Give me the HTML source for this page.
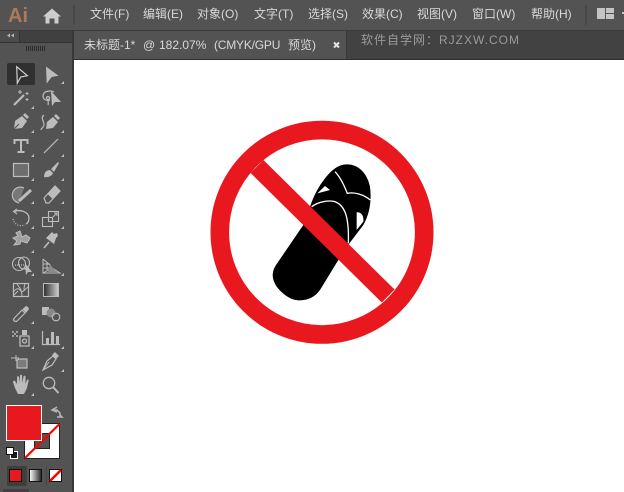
<!DOCTYPE html>
<html><head><meta charset="utf-8">
<style>
html,body{margin:0;padding:0;width:624px;height:492px;overflow:hidden;background:#fff}
#a{position:relative;width:624px;height:492px;overflow:hidden;background:#fff;font-family:"Liberation Sans","Noto Sans CJK SC",sans-serif}
.b{position:absolute}
.m{position:absolute;top:6px;font-size:12px;line-height:16px;color:#d8d8d8;white-space:nowrap}
.t{position:absolute;top:37px;font-size:12px;line-height:16px;color:#d8d8d8;white-space:nowrap}
</style></head><body><div id="a">
<div class="b" style="left:0;top:0;width:624px;height:30px;background:#535353"></div>
<div class="b" style="left:0;top:30px;width:624px;height:1px;background:#3a3a3a"></div>
<div class="b" style="left:0;top:31px;width:74px;height:461px;background:#535353"></div>
<div class="b" style="left:72px;top:31px;width:2px;height:461px;background:#383838"></div>
<div class="b" style="left:0;top:31px;width:72px;height:11px;background:#404040"></div>
<div class="b" style="left:0;top:31px;width:19px;height:11px;background:#4c4c4c"></div>
<div class="b" style="left:19px;top:31px;width:1px;height:11px;background:#333"></div>
<div class="b" style="left:0;top:42px;width:72px;height:1px;background:#333"></div>
<div class="b" style="left:74px;top:31px;width:550px;height:28px;background:#424242"></div>
<div class="b" style="left:74px;top:31px;width:272px;height:28px;background:#535353"></div>
<div class="b" style="left:346px;top:31px;width:1px;height:28px;background:#383838"></div>
<div class="b" style="left:74px;top:59px;width:550px;height:1px;background:#2f2f2f"></div>

<div class="b" style="left:8px;top:3px;font-size:20px;line-height:26px;font-weight:bold;color:#ad7a57">Ai</div>
<div class="b" style="left:73px;top:5px;width:2px;height:20px;background:#484848"></div>
<div class="b" style="left:585px;top:5px;width:2px;height:20px;background:#484848"></div>

<div class="m" style="left:90px">文件(F)</div>
<div class="m" style="left:143px">编辑(E)</div>
<div class="m" style="left:197px">对象(O)</div>
<div class="m" style="left:254px">文字(T)</div>
<div class="m" style="left:308px">选择(S)</div>
<div class="m" style="left:362px">效果(C)</div>
<div class="m" style="left:417px">视图(V)</div>
<div class="m" style="left:472px">窗口(W)</div>
<div class="m" style="left:531px">帮助(H)</div>

<div class="t" style="left:84px">未标题-1*</div>
<div class="t" style="left:143px">@</div>
<div class="t" style="left:159px">182.07%</div>
<div class="t" style="left:214px;letter-spacing:-.2px">(CMYK/GPU</div>
<div class="t" style="left:288px">预览)</div>
<div class="b" style="left:361px;top:32px;font-size:12px;line-height:16px;color:#9a9a9a;white-space:nowrap;letter-spacing:1px">软件自学网：RJZXW.COM</div>

<svg class="b" style="left:0;top:0" width="624" height="492" viewBox="0 0 624 492">
<!-- home -->
<path d="M43 16.500 52 8.500 61 16.500 58.500 16.500V23.500H54.500V18.500H49.500V23.500H45.500V16.500Z" fill="#cdcdcd"/>
<!-- workspace -->
<path d="M597 8h8v11h-8zM606 8h8v5h-8zM606 14h8v5h-8z" fill="#c4c4c4"/>
<rect x="622" y="12" width="2" height="2" fill="#c4c4c4"/>
<!-- tab close -->
<path d="M334 42.500 339 47.500M339 42.500 334 47.500" stroke="#e6e6e6" stroke-width="2"/>
<!-- panel collapse -->
<path d="M10 33.500 7 35.500 10 37.500ZM14 33.500 11 35.500 14 37.500Z" fill="#b5b5b5"/>
<!-- grip -->
<path d="M26.500 46V51M28.500 46V51M30.500 46V51M32.500 46V51M34.500 46V51M36.500 46V51M38.500 46V51M40.500 46V51M42.500 46V51M44.500 46V51" stroke="#2c2c2c" stroke-width="1"/>

<!-- selected tool -->
<rect x="7" y="63" width="28" height="22" rx="2" fill="#303030"/>

<g fill="none" stroke="#bcbcbc" stroke-width="1.200">
<!-- selection -->
<path d="M16.700 66.700 27.300 75.700 20.700 77 17.300 83.300Z" stroke="#d0d0d0"/>
<!-- direct selection -->
<path d="M46 66.500 58.500 75.700 51.700 77 46.700 83.500Z" fill="#bcbcbc" stroke="none"/>
<!-- wand -->
<path d="M14 105 24 95" stroke-width="2.200"/>
<path d="M20 90v4M18 92h4M27 92v3M25.500 93.500h3M27 98v3M25.500 99.500h3" stroke-width="1"/>
<!-- lasso -->
<path d="M54 92C50 90 43 91 43 96 43 100 47 101 50 100M49 99C47 101 49 103 48 105"/>
<circle cx="48" cy="98" r="1.500"/>
<path d="M51 91 61 102 55 102 52 106Z" fill="#bcbcbc" stroke="none"/>
<!-- pen -->
<path d="M14 129 15 121 22 116 27 121 22 128Z" fill="#bcbcbc" stroke="none"/>
<path d="M23 115 25 113 29 117 27 119Z" fill="#bcbcbc" stroke="none"/>
<path d="M14 129 19 124" stroke="#535353" stroke-width="1"/>
<!-- curvature -->
<path d="M46 129 47 122 53 117 58 122 53 128Z" fill="#bcbcbc" stroke="none"/>
<path d="M54 116 56 114 60 118 58 120Z" fill="#bcbcbc" stroke="none"/>
<path d="M44 115C40 118 44 121 44 124 44 128 41 128 41 130"/>
<!-- type -->
<path d="M14.500 144V140H27.500V144M21 140V152M17.500 152H24.500" stroke-width="2"/>
<!-- line -->
<path d="M44 153 58 139"/>
<!-- rect -->
<rect x="13.500" y="163.500" width="15" height="13" fill="#6e6e6e"/>
<!-- brush -->
<path d="M44 177C44 172 47 170 50 170L53 173C52 176 48 178 44 177Z" fill="#bcbcbc" stroke="none"/>
<path d="M51 169 58 162 59 163 54 172Z" fill="#bcbcbc" stroke="none"/>
<!-- shaper -->
<path d="M19 203A8 8 0 1 1 24 188" fill="#787878"/>
<path d="M19 201 31 190" stroke-width="3"/>
<!-- eraser -->
<path d="M44 198 55 186 60 191 49 203 46 203Z"/>
<path d="M47.500 194 55 186 60 191 52.500 199Z" fill="#bcbcbc" stroke="none"/>
<!-- rotate -->
<path d="M17 209 13.500 211.500 17 214" stroke-width="1.200"/>
<path d="M14 211.500C20 209 29 212 29 218 29 221 28 223 26 224" stroke-width="1.300"/>
<path d="M13 219C14 224 19 227 25 225" stroke-dasharray="1 1.500"/>
<!-- scale -->
<rect x="42.500" y="217.500" width="10" height="9" stroke-width="1.100"/>
<rect x="48.500" y="211.500" width="10" height="10" stroke-width="1.100"/>
<path d="M53 217 57 213M54 213H57V216" stroke-width="1"/>
<!-- warp -->
<path d="M13 238 18 236 16 233 20 231 22 237 26 235 30 238 27 243 21 241 20 244 14 245 17 241Z" fill="#a0a0a0" stroke-width="1"/>
<!-- pin -->
<path d="M44 248 49 242" stroke-width="1.600"/>
<path d="M46 238 52 232 54 234 57 233 58 236 56 238 54 244Z" fill="#bcbcbc" stroke="none"/>
<!-- shape builder -->
<ellipse cx="19" cy="264" rx="6.500" ry="6.500" stroke-width="1.100"/>
<ellipse cx="24" cy="263" rx="5.500" ry="6" stroke-width="1.100"/>
<path d="M15 265H24" stroke-dasharray="1 1"/>
<path d="M25 263 32 272 28 272 26 275Z" fill="#bcbcbc" stroke="none"/>
<!-- perspective -->
<path d="M43 259 43 273 52 268 60 273H43M43 259 50 265 52 268M43 264H50M43 268H50M47 262 47 270" stroke-width="1"/>
<path d="M50 265 57 272H48Z" fill="#8a8a8a" stroke="none"/>
<!-- mesh -->
<rect x="13.500" y="283.500" width="15" height="13" stroke-width="1.200"/>
<path d="M14 291C18 287 19 289 21 291 23 293 25 289 28 287M17 284C19 287 22 289 22 296M25 284C24 286 24 289 24 291M14 295 18 291" stroke-width="1"/>
</g>
<!-- gradient -->
<defs>
<linearGradient id="g" x1="0" x2="1" y1="0" y2="0"><stop offset="0" stop-color="#2c2c2c"/><stop offset="1" stop-color="#cfcfcf"/></linearGradient>
<linearGradient id="g2" x1="0" x2="1" y1="0" y2="0"><stop offset="0" stop-color="#fff"/><stop offset="1" stop-color="#222"/></linearGradient>
</defs>
<rect x="43.500" y="283.500" width="15" height="13" fill="url(#g)" stroke="#bcbcbc"/>

<g fill="none" stroke="#bcbcbc" stroke-width="1.200">
<!-- eyedropper -->
<path d="M14 321 13.500 319 22 310 25 313 16.500 321.500Z" stroke-width="1.200"/>
<path d="M22.500 309 26 306 28 307 29 309 26 313Z" fill="#bcbcbc" stroke="none"/>
<!-- blend -->
<rect x="42" y="307" width="7" height="8" fill="#bcbcbc" stroke="none"/>
<circle cx="51" cy="313" r="4.500" fill="#8a8a8a" stroke="none"/>
<circle cx="56" cy="317" r="3.800" stroke-width="1.100"/>
<!-- symbol sprayer -->
<path d="M12 331h2v2h-2zM16 331h2v2h-2zM12 335h2v2h-2zM16 335h2v2h-2zM14 333h2v2h-2z" fill="#a0a0a0" stroke="none"/>
<path d="M20 336V346H29V336Z" stroke-width="1.300"/>
<rect x="22" y="330" width="5" height="5" fill="#bcbcbc" stroke="none"/>
<circle cx="24.500" cy="341" r="2" stroke-width="1.300"/>
<!-- graph -->
<path d="M42.500 331V344.500H60" stroke-width="1.200"/>
<path d="M46 338h3v6h-3zM51 332h3v12h-3zM56 336h3v8h-3z" fill="#bcbcbc" stroke="none"/>
<!-- artboard -->
<path d="M11 358H19M16 355V361" stroke-width="1"/>
<path d="M19 359H27V368H17V360Z" fill="#7c7c7c"/>
<!-- slice -->
<path d="M43 370 47 361 53 356 56 359 52 365Z"/>
<path d="M52 355 55 352 59 356 56 359Z" fill="#bcbcbc" stroke="none"/>
<path d="M43 370 49 362" stroke-width="1"/>
<!-- hand -->
<path d="M15 388 13 382C13 381 14 380 15 381L17 384 17 377C17 376 19 376 19 377L19.500 383 20 375.500C20 374.500 22 374.500 22 375.500L22.500 383 23.500 376.500C23.500 375.500 25.500 375.500 25.500 376.500L25.500 384 27 380C27.500 379 29 379.500 28.500 381L27 388 24 394H18Z" fill="#bcbcbc" stroke="none"/>
<!-- zoom -->
<circle cx="49" cy="383" r="5.700" stroke-width="1.300"/>
<path d="M53 387 58.500 393" stroke-width="2"/>
</g>

<!-- small corner triangles -->
<g fill="#c0c0c0">
<path d="M64 81V84H61Z"/><path d="M34 106V109H31Z"/><path d="M34 130V133H31Z"/><path d="M64 130V133H61Z"/>
<path d="M34 154V157H31Z"/><path d="M64 154V157H61Z"/><path d="M34 178V181H31Z"/><path d="M64 178V181H61Z"/>
<path d="M34 201V204H31Z"/><path d="M64 201V204H61Z"/><path d="M34 226V229H31Z"/><path d="M64 226V229H61Z"/>
<path d="M34 250V253H31Z"/><path d="M64 250V253H61Z"/><path d="M34 273V276H31Z"/><path d="M64 273V276H61Z"/>
<path d="M34 321V324H31Z"/><path d="M34 346V349H31Z"/><path d="M64 346V349H61Z"/><path d="M64 369V372H61Z"/><path d="M34 393V396H31Z"/>
</g>

<!-- fill / stroke -->
<rect x="24.500" y="423.500" width="35" height="35" fill="#fff" stroke="#222"/>
<rect x="34.500" y="433.500" width="15" height="15" fill="#535353" stroke="#222"/>
<path d="M25 458 59.500 424" stroke="#f00" stroke-width="2.200"/>
<rect x="6.500" y="405.500" width="35" height="35" fill="#e8181f" stroke="#fff"/>
<path d="M52 410H57L60 413V417M57 407 52 410 57 412M57 417H62L59.500 414.500" fill="none" stroke="#b5b5b5" stroke-width="1.500"/>
<rect x="10.500" y="451.500" width="7" height="7" fill="#1a1a1a" stroke="#fff"/>
<rect x="6.500" y="447.500" width="7" height="7" fill="#fff" stroke="#111"/>

<!-- modes -->
<rect x="7" y="466" width="19" height="20" fill="#3e3e3e"/>
<rect x="26" y="466" width="1" height="20" fill="#484848"/>
<rect x="46" y="466" width="1" height="20" fill="#484848"/>
<rect x="9.500" y="469.500" width="12" height="12" fill="#e8181f" stroke="#111"/>
<rect x="29.500" y="469.500" width="12" height="12" fill="url(#g2)" stroke="#111"/>
<rect x="49.500" y="469.500" width="12" height="12" fill="#fff" stroke="#111"/>
<path d="M50 481 61 470" stroke="#f00" stroke-width="2.500"/>
<rect x="3" y="489" width="26" height="3" fill="#404040"/>

<!-- artwork -->
<g transform="translate(260 150) scale(.33333)">
<path d="M130 225 48 345C35 365 34 385 50 410 65 430 90 450 115 451 145 452 165 440 180 420L232 335 268 280 310 225C330 190 335 150 330 110 322 70 295 42 260 43 235 43 215 60 195 85 175 110 160 140 150 170Z" fill="#000"/>
<path d="M225 65C240 80 252 105 262 130 285 125 312 135 331 150" fill="none" stroke="#fff" stroke-width="4"/>
<path d="M155 170C175 155 205 150 225 155 250 165 268 190 265 280" fill="none" stroke="#fff" stroke-width="4"/>
<path d="M172 130 195 108 210 120Z" fill="#fff"/>
<path d="M290 187C305 185 312 200 310 215L290 240Z" fill="#fff"/>
</g>
<circle cx="322" cy="232.300" r="102.200" fill="none" stroke="#e8181e" stroke-width="18.600"/>
<path d="M257 166.500 388.200 296" stroke="#e8181e" stroke-width="18.200" fill="none"/>
</svg>
</div></body></html>
